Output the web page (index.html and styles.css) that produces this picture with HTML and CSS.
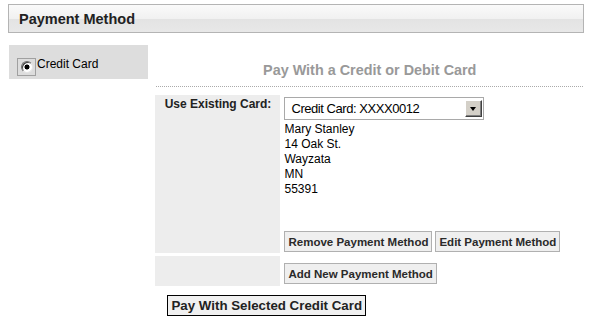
FILE: index.html
```html
<!DOCTYPE html>
<html lang="en">
<head>
  <meta charset="UTF-8" />
  <meta name="viewport" content="width=device-width, initial-scale=1.0"/>
  <title>Payment Method</title>
  <link rel="stylesheet" href="styles.css">
</head>
<body>
  <div class="page">
    <div class="section-bar">
      <h2>Payment Method</h2>
    </div>

    <div class="layout">
      <div class="methods">
        <label class="method">
          <span class="radio-box"><span class="radio"></span></span>
          <span class="method-name">Credit Card</span>
        </label>
      </div>

      <div class="pane">
        <h3>Pay With a Credit or Debit Card</h3>

        <table class="card-table">
          <tr>
            <td class="label">Use Existing Card:</td>
            <td class="value">
              <div class="select">
                <span class="select-text">Credit Card: XXXX0012</span>
                <span class="select-btn"><span class="arrow"></span></span>
              </div>
              <div class="address">
                Mary Stanley<br>
                14 Oak St.<br>
                Wayzata<br>
                MN<br>
                55391
              </div>
              <div class="actions">
                <button class="btn">Remove Payment Method</button>
                <button class="btn">Edit Payment Method</button>
              </div>
            </td>
          </tr>
          <tr>
            <td class="label"></td>
            <td class="value add-cell">
              <button class="btn">Add New Payment Method</button>
            </td>
          </tr>
        </table>

        <button class="pay-btn">Pay With Selected Credit Card</button>
      </div>
    </div>
  </div>
</body>
</html>
```

FILE: styles.css
```css
body {
  margin: 0;
  padding: 4px 8px;
  font-family: "Liberation Sans", Arial, sans-serif;
  background: #fff;
  color: #000;
}
.page {
  width: 576px;
}
.section-bar {
  box-sizing: border-box;
  height: 29px;
  border: 1px solid #b4b4b4;
  background: linear-gradient(#fafafa, #f1f1f1 50%, #e3e3e3 52%, #e8e8e8);
  padding-left: 10px;
  display: flex;
  align-items: center;
}
.section-bar h2 {
  margin: 0;
  font-size: 14.5px;
  font-weight: bold;
  color: #222;
}
.layout {
  display: flex;
  margin-top: 12px;
}
.methods {
  width: 147px;
  padding-left: 1px;
}
.method {
  display: flex;
  align-items: flex-start;
  box-sizing: border-box;
  width: 139px;
  height: 34px;
  background: #dddddd;
  padding: 13px 0 0 8px;
  font-size: 12px;
}
.radio-box {
  box-sizing: border-box;
  width: 19px;
  height: 18px;
  border: 1px solid #a0a0a0;
  display: flex;
  align-items: center;
  justify-content: center;
}
.radio {
  box-sizing: border-box;
  width: 12px;
  height: 12px;
  border-radius: 50%;
  background: radial-gradient(circle, #000 2.2px, #fff 2.8px);
  border: 1px solid;
  border-color: #6f6f6f #e6e6e6 #e6e6e6 #6f6f6f;
  box-shadow: inset 1px 1px 0 #404040;
}
.method-name {
  line-height: 15px;
  margin-top: -1px;
  margin-left: 1px;
}
.pane {
  width: 430px;
}
.pane h3 {
  margin: 17px 1px 0;
  padding-bottom: 8px;
  border-bottom: 1px dotted #aaa;
  font-size: 14.4px;
  line-height: 16px;
  font-weight: bold;
  color: #999;
  text-align: center;
}
.card-table {
  border-spacing: 3px;
  margin: 5px 0 0 -3px;
  font-size: 12px;
}
.card-table td {
  padding: 2px 1px 1px;
  vertical-align: top;
  line-height: 15px;
}
.card-table .label {
  width: 121px;
  padding: 2px;
  background: #ededed;
  font-weight: bold;
  text-align: center;
  color: #222;
}
.select {
  box-sizing: border-box;
  width: 200px;
  height: 23px;
  border: 1px solid #a9a9a9;
  display: flex;
  align-items: center;
  justify-content: space-between;
  padding-left: 6px;
}
.select-text {
  font-size: 13px;
  letter-spacing: -0.45px;
}
.select-btn {
  box-sizing: border-box;
  width: 17px;
  height: 17px;
  margin-right: 1px;
  background: #d4d0c8;
  border: 1px solid;
  border-color: #fff #404040 #404040 #fff;
  box-shadow: inset -1px -1px 0 #808080;
  display: flex;
  align-items: center;
  justify-content: center;
}
.arrow {
  width: 0;
  height: 0;
  border-left: 3.5px solid transparent;
  border-right: 3.5px solid transparent;
  border-top: 4px solid #000;
  margin: 1px 1px 0 0;
}
.address {
  margin-top: 2px;
}
.actions {
  display: flex;
  gap: 3px;
  margin-top: 34px;
}
.btn {
  height: 21px;
  padding: 0 3px;
  border: 1px solid #b0b0b0;
  background: #efefef;
  font-family: "Liberation Sans", Arial, sans-serif;
  font-size: 11.5px;
  font-weight: bold;
  color: #2a2a2a;
}
.card-table .add-cell {
  padding: 7px 1px 2px;
}
.pay-btn {
  display: block;
  margin: 6px 0 0 12px;
  height: 21px;
  padding: 0 3px;
  border: 1px solid #000;
  background: #f0f0f0;
  font-family: "Liberation Sans", Arial, sans-serif;
  font-size: 13.3px;
  font-weight: bold;
  color: #222;
}
```
